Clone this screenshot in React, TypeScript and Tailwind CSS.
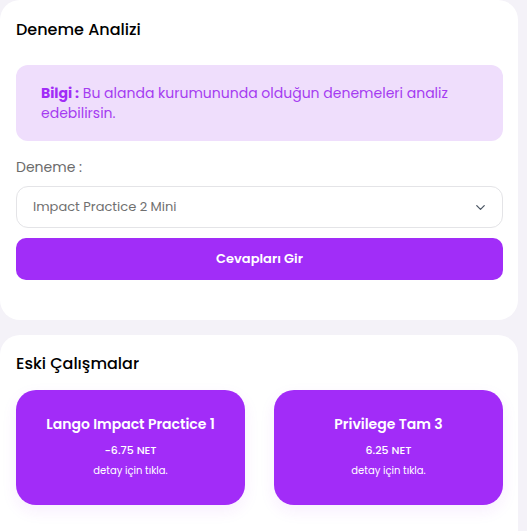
import { ChevronDown } from "lucide-react";

const font = { fontFamily: "Poppins, Inter, 'Noto Sans', sans-serif" };

const works = [
  { title: "Lango Impact Practice 1", net: "-6.75 NET" },
  { title: "Privilege Tam 3", net: "6.25 NET" },
];

export default function App() {
  return (
    <div className="h-[531px] w-[527px] overflow-hidden bg-[#f4f2f8]" style={font}>
      {/* Deneme Analizi */}
      <div className="w-[518px] rounded-[20px] bg-white pl-4 pr-[15px] pt-[19px] pb-[40px]">
        <h2 className="text-[16px] font-medium leading-[22px] text-black">Deneme Analizi</h2>

        <div className="mt-[24px] rounded-[12px] bg-[#efdefc] px-[25px] py-[18px] text-[14px] leading-[20px] text-[#a53cf1]">
          <span className="font-bold text-[#a12df7]">Bilgi :</span> Bu alanda kurumununda olduğun denemeleri analiz
          edebilirsin.
        </div>

        <div className="mt-[16px] text-[14px] leading-[20px] text-[#6b6b6b]">Deneme :</div>

        <div className="mt-[9px] flex h-[42px] items-center justify-between rounded-[12px] border border-[#e4e4e7] pl-4 pr-[14px]">
          <span className="text-[13px] text-[#707070]">Impact Practice 2 Mini</span>
          <ChevronDown size={15} strokeWidth={2} className="text-[#4b5563]" />
        </div>

        <button className="mt-[10px] flex h-[42px] w-full items-center justify-center rounded-[10px] bg-[#a12df8] text-[13px] font-semibold text-white">
          Cevapları Gir
        </button>
      </div>

      {/* Eski Çalışmalar */}
      <div className="mt-[15px] w-[518px] rounded-t-[20px] bg-white pl-4 pr-[15px] pt-[17px] pb-[30px]">
        <h2 className="text-[16px] font-medium leading-[24px] text-black">Eski Çalışmalar</h2>
        <div className="mt-[14px] grid grid-cols-2 gap-[29px]">
          {works.map((w) => (
            <div
              key={w.title}
              className="flex h-[115px] flex-col items-center justify-center rounded-[20px] bg-[#a22cf8] pb-[2px] text-white shadow-[0_6px_16px_rgba(160,44,248,0.08)]"
            >
              <div className="text-[14px] font-semibold leading-[20px]">{w.title}</div>
              <div className="mt-[8px] text-[11px] font-medium leading-[16px]">{w.net}</div>
              <div className="mt-[5px] text-[10px] leading-[16px]">detay için tıkla.</div>
            </div>
          ))}
        </div>
      </div>
    </div>
  );
}
